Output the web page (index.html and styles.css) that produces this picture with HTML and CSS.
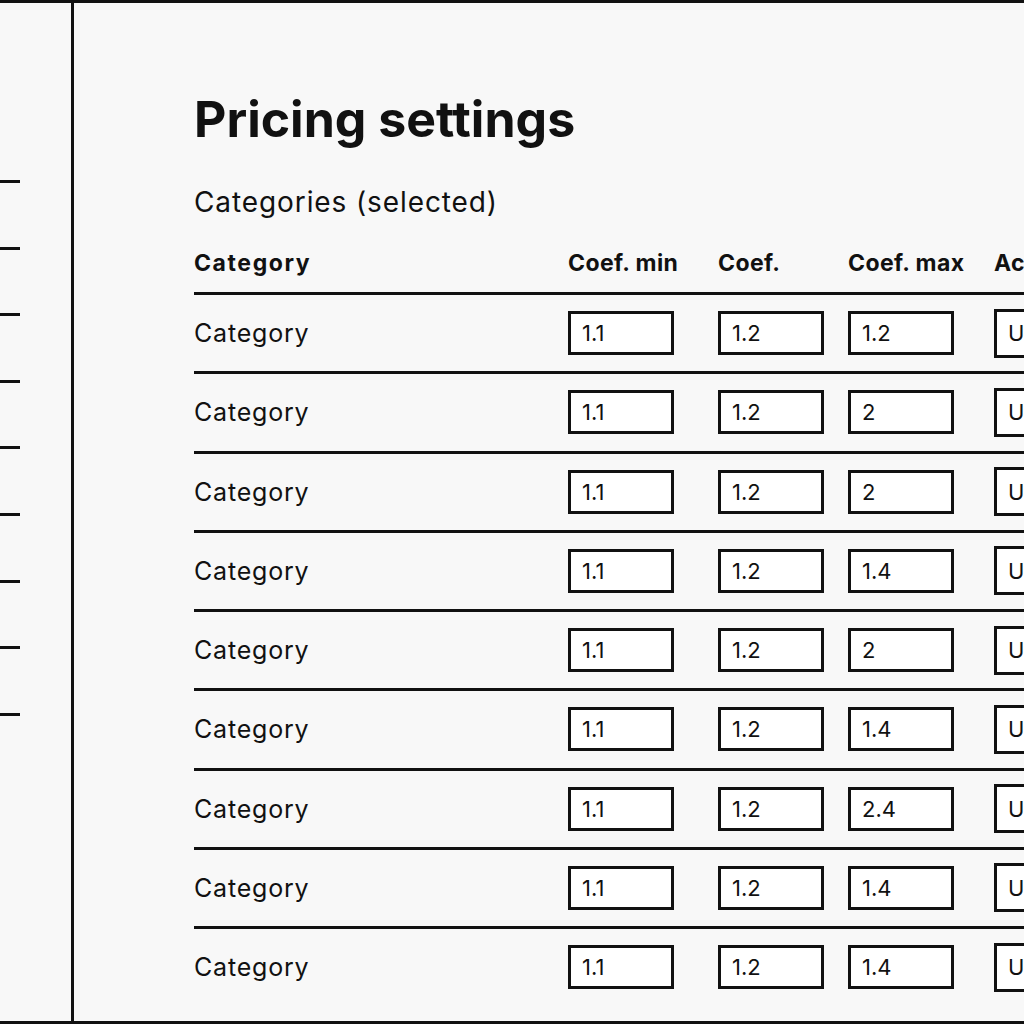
FILE: index.html
```html
<!DOCTYPE html>
<html lang="en">
<head>
<meta charset="utf-8">
<title>Pricing settings</title>
<link rel="stylesheet" href="styles.css">
</head>
<body>
<div class="window">
  <aside class="sidebar">
    <nav class="nav">
      <span class="nav-item"></span>
      <span class="nav-item"></span>
      <span class="nav-item"></span>
      <span class="nav-item"></span>
      <span class="nav-item"></span>
      <span class="nav-item"></span>
      <span class="nav-item"></span>
      <span class="nav-item"></span>
      <span class="nav-item"></span>
    </nav>
  </aside>
  <main class="main">
    <h1 class="title">Pricing settings</h1>
    <h2 class="subtitle">Categories (selected)</h2>
    <div class="table">
      <div class="row head">
        <div class="cell">Category</div>
        <div class="cell">Coef. min</div>
        <div class="cell">Coef.</div>
        <div class="cell">Coef. max</div>
        <div class="cell">Action</div>
      </div>
      <div class="row"><div class="cell">Category</div><div class="cell"><span class="field">1.1</span></div><div class="cell"><span class="field">1.2</span></div><div class="cell"><span class="field">1.2</span></div><div class="cell"><span class="btn">Update</span></div></div>
      <div class="row"><div class="cell">Category</div><div class="cell"><span class="field">1.1</span></div><div class="cell"><span class="field">1.2</span></div><div class="cell"><span class="field">2</span></div><div class="cell"><span class="btn">Update</span></div></div>
      <div class="row"><div class="cell">Category</div><div class="cell"><span class="field">1.1</span></div><div class="cell"><span class="field">1.2</span></div><div class="cell"><span class="field">2</span></div><div class="cell"><span class="btn">Update</span></div></div>
      <div class="row"><div class="cell">Category</div><div class="cell"><span class="field">1.1</span></div><div class="cell"><span class="field">1.2</span></div><div class="cell"><span class="field">1.4</span></div><div class="cell"><span class="btn">Update</span></div></div>
      <div class="row"><div class="cell">Category</div><div class="cell"><span class="field">1.1</span></div><div class="cell"><span class="field">1.2</span></div><div class="cell"><span class="field">2</span></div><div class="cell"><span class="btn">Update</span></div></div>
      <div class="row"><div class="cell">Category</div><div class="cell"><span class="field">1.1</span></div><div class="cell"><span class="field">1.2</span></div><div class="cell"><span class="field">1.4</span></div><div class="cell"><span class="btn">Update</span></div></div>
      <div class="row"><div class="cell">Category</div><div class="cell"><span class="field">1.1</span></div><div class="cell"><span class="field">1.2</span></div><div class="cell"><span class="field">2.4</span></div><div class="cell"><span class="btn">Update</span></div></div>
      <div class="row"><div class="cell">Category</div><div class="cell"><span class="field">1.1</span></div><div class="cell"><span class="field">1.2</span></div><div class="cell"><span class="field">1.4</span></div><div class="cell"><span class="btn">Update</span></div></div>
      <div class="row"><div class="cell">Category</div><div class="cell"><span class="field">1.1</span></div><div class="cell"><span class="field">1.2</span></div><div class="cell"><span class="field">1.4</span></div><div class="cell"><span class="btn">Update</span></div></div>
    </div>
  </main>
</div>
</body>
</html>
```

FILE: styles.css
```css
* { box-sizing: border-box; }
html, body {
  margin: 0;
  padding: 0;
  background: #f8f8f8;
}
body {
  font-family: Inter, "Noto Sans", sans-serif;
  color: #111;
  overflow: hidden;
}
.window {
  display: flex;
  width: 1024px;
  height: 1024px;
  border-top: 3px solid #111;
  border-bottom: 3px solid #111;
  overflow: hidden;
}
.sidebar {
  flex: 0 0 74px;
  border-right: 3px solid #111;
}
.nav {
  display: flex;
  flex-direction: column;
  gap: 63.6px;
  padding-top: 177px;
}
.nav-item {
  display: block;
  width: 20px;
  height: 3px;
  background: #111;
}
.main {
  flex: 1 1 auto;
  min-width: 0;
  padding-left: 120px;
  overflow: hidden;
}
.title {
  margin: 0;
  padding-top: 86px;
  font-size: 50px;
  line-height: 60px;
  font-weight: 700;
}
.subtitle {
  margin: 0;
  padding-top: 36px;
  font-size: 28px;
  line-height: 34px;
  font-weight: 400;
  letter-spacing: 0.9px;
}
.table {
  margin-top: 30px;
  width: 1000px;
}
.row {
  display: grid;
  grid-template-columns: 374px 150px 130px 146px 200px;
  align-items: center;
  height: 79.25px;
  border-top: 3px solid #111;
  font-size: 25px;
  letter-spacing: 0.8px;
}
.row.head {
  border-top: none;
  height: 43px;
  align-items: start;
  font-size: 23px;
  font-weight: 700;
  letter-spacing: 0.4px;
}
.row.head .cell:first-child {
  letter-spacing: 1.6px;
}
.cell {
  white-space: nowrap;
}
.field {
  display: flex;
  align-items: center;
  width: 106px;
  height: 44px;
  border: 3px solid #111;
  background: #fff;
  padding-left: 11px;
  font-size: 22px;
  letter-spacing: 0;
}
.btn {
  display: flex;
  align-items: center;
  width: 120px;
  height: 49px;
  border: 3px solid #111;
  background: #fff;
  padding-left: 11px;
  font-size: 22px;
  letter-spacing: 0;
}
```
